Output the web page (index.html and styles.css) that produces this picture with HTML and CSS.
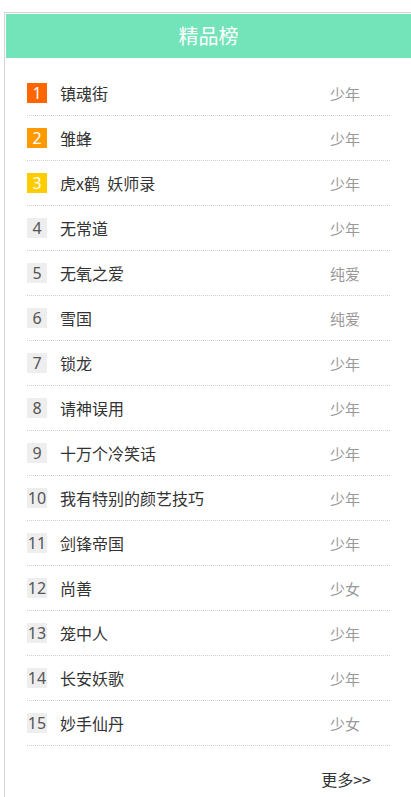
FILE: index.html
```html
<!DOCTYPE html>
<html lang="zh">
<head>
<meta charset="utf-8">
<title>精品榜</title>
<link rel="stylesheet" href="styles.css">
</head>
<body>
<div class="board">
  <div class="board-head">精品榜</div>
  <ul class="rank-list">
    <li class="rank-row"><span class="num n1">1</span><span class="title">镇魂街</span><span class="cat">少年</span></li>
    <li class="rank-row"><span class="num n2">2</span><span class="title">雏蜂</span><span class="cat">少年</span></li>
    <li class="rank-row"><span class="num n3">3</span><span class="title">虎x鹤&nbsp; 妖师录</span><span class="cat">少年</span></li>
    <li class="rank-row"><span class="num">4</span><span class="title">无常道</span><span class="cat">少年</span></li>
    <li class="rank-row"><span class="num">5</span><span class="title">无氧之爱</span><span class="cat">纯爱</span></li>
    <li class="rank-row"><span class="num">6</span><span class="title">雪国</span><span class="cat">纯爱</span></li>
    <li class="rank-row"><span class="num">7</span><span class="title">锁龙</span><span class="cat">少年</span></li>
    <li class="rank-row"><span class="num">8</span><span class="title">请神误用</span><span class="cat">少年</span></li>
    <li class="rank-row"><span class="num">9</span><span class="title">十万个冷笑话</span><span class="cat">少年</span></li>
    <li class="rank-row"><span class="num">10</span><span class="title">我有特别的颜艺技巧</span><span class="cat">少年</span></li>
    <li class="rank-row"><span class="num">11</span><span class="title">剑锋帝国</span><span class="cat">少年</span></li>
    <li class="rank-row"><span class="num">12</span><span class="title">尚善</span><span class="cat">少女</span></li>
    <li class="rank-row"><span class="num">13</span><span class="title">笼中人</span><span class="cat">少年</span></li>
    <li class="rank-row"><span class="num">14</span><span class="title">长安妖歌</span><span class="cat">少年</span></li>
    <li class="rank-row"><span class="num">15</span><span class="title">妙手仙丹</span><span class="cat">少女</span></li>
  </ul>
  <div class="more-wrap"><a class="more" href="#">更多&gt;&gt;</a></div>
</div>
</body>
</html>
```
FILE: styles.css
```css
html, body {
  margin: 0;
  padding: 0;
  overflow: hidden;
  background: #fff;
}
body {
  font-family: "Noto Sans CJK SC", "Microsoft YaHei", sans-serif;
  color: #333;
}
.board {
  margin: 12px 0 0 4px;
  width: 420px;
  height: 800px;
  border: 1px solid #d4d4d4;
  border-right: none;
  padding: 1px;
  box-sizing: border-box;
}
.board-head {
  height: 44px;
  background: #73e3b9;
  color: #fff;
  font-size: 20px;
  line-height: 44px;
  text-align: center;
  width: 405px;
}
.rank-list {
  list-style: none;
  margin: 13px 0 0 21px;
  padding: 0;
  width: 363px;
}
.rank-row {
  display: flex;
  align-items: center;
  height: 44px;
  border-bottom: 1px dotted #cfcfcf;
}
.num {
  width: 20px;
  height: 20px;
  line-height: 20px;
  text-align: center;
  font-size: 16px;
  background: #eeeeee;
  color: #555;
  font-family: "Noto Sans", "Liberation Sans", sans-serif;
  flex: none;
}
.num.n1 { background: #ff6600; color: #fff; }
.num.n2 { background: #ff9900; color: #fff; }
.num.n3 { background: #ffcc00; color: #fff; }
.title {
  flex: 1;
  margin-left: 13px;
  font-size: 16px;
  color: #333;
  white-space: nowrap;
}
.cat {
  width: 60px;
  flex: none;
  font-size: 15px;
  color: #999;
}
.more-wrap {
  width: 363px;
  margin-left: 21px;
  text-align: right;
  padding-top: 21px;
}
.more {
  display: inline-block;
  margin-right: 19px;
  font-size: 16px;
  color: #333;
  text-decoration: none;
}
```
